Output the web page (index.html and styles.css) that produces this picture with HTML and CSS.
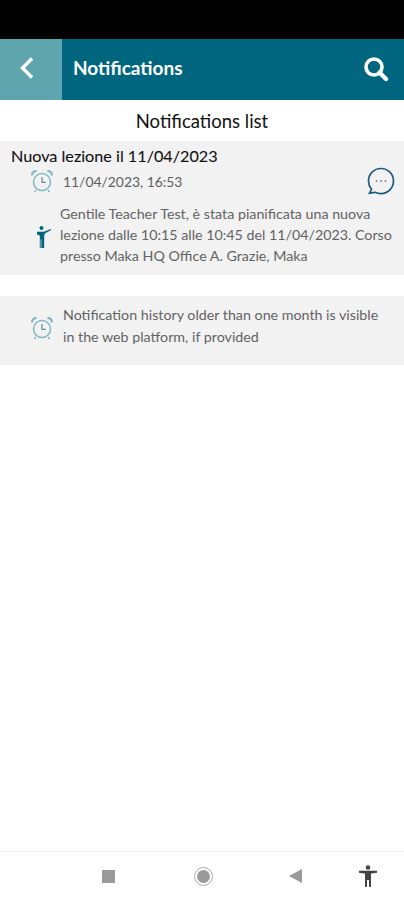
FILE: index.html
```html
<!DOCTYPE html>
<html lang="en">
<head>
<meta charset="utf-8">
<title>Notifications</title>
<link rel="stylesheet" href="styles.css">
</head>
<body>
<div class="app">
  <div class="statusbar"></div>
  <header class="topbar">
    <div class="back">
      <svg width="16" height="24" viewBox="0 0 16 24"><path d="M13 2.500 3.500 12 13 21.500" fill="none" stroke="#fff" stroke-width="3.400"/></svg>
    </div>
    <div class="title">Notifications</div>
    <svg class="search" width="26" height="26" viewBox="0 0 26 26"><circle cx="11" cy="11" r="8" fill="none" stroke="#fff" stroke-width="3.600"/><path d="M16.500 16.500 23 23" stroke="#fff" stroke-width="4.400" stroke-linecap="round"/></svg>
  </header>
  <h1 class="listhead">Notifications list</h1>
  <section class="card">
    <h2 class="cardtitle">Nuova lezione il 11/04/2023</h2>
    <div class="daterow">
      <svg class="clock" width="24" height="24" viewBox="0 0 24 24"><use href="#alarm"/></svg>
      <span class="date">11/04/2023, 16:53</span>
      <svg class="chat" width="30" height="30" viewBox="0 0 30 30"><path d="M15 2.500C8 2.500 2.500 8 2.500 15c0 3.200 1.200 6.100 3 8.300L3.500 27.200 9 26.300c1.800.9 3.900 1.300 6 1.300 7 0 12.500-5.600 12.500-12.600S22 2.500 15 2.500Z" fill="none" stroke="#1f5a84" stroke-width="1.700"/><circle cx="10.500" cy="15" r=".9" fill="#6b7f8c"/><circle cx="15" cy="15" r=".9" fill="#6b7f8c"/><circle cx="19.500" cy="15" r=".9" fill="#6b7f8c"/></svg>
    </div>
    <div class="msgrow">
      <svg class="teacher" width="16" height="24" viewBox="0 0 16 24"><circle cx="5.500" cy="3" r="2" fill="#00667f"/><path d="M1 6.800h6.800L14.800 4l.4.9-6.400 3.600-.6 2.500V23H5.300v-8.500H4.700V23H3.800V10.500L1 9.500Z" fill="#00667f"/></svg>
      <p class="msg">Gentile Teacher Test, è stata pianificata una nuova lezione dalle 10:15 alle 10:45 del 11/04/2023. Corso presso Maka HQ Office A. Grazie, Maka</p>
    </div>
  </section>
  <section class="card note">
    <svg class="clock" width="24" height="24" viewBox="0 0 24 24"><use href="#alarm"/></svg>
    <p class="msg">Notification history older than one month is visible in the web platform, if provided</p>
  </section>
  <div class="spacer"></div>
  <nav class="navbar">
    <span class="navsquare"></span>
    <span class="navhome"><span class="navdot"></span></span>
    <svg class="navback" width="13" height="16" viewBox="0 0 13 16"><path d="M13 1v14L0 8Z" fill="#9a9a9a"/></svg>
    <svg class="a11y" width="20" height="22" viewBox="0 0 20 22"><circle cx="10" cy="2.500" r="2.300" fill="#444"/><path d="M1 5.800h18v1.900l-6 .9V22h-2v-7H9v7H7V8.600l-6-.9Z" fill="#444"/></svg>
  </nav>
</div>
<svg class="defs" width="0" height="0"><defs><g id="alarm" fill="none" stroke="#7fbac1"><circle cx="12" cy="13" r="8.500" stroke-width="1.500"/><path d="M12 8v5.300h3.800" stroke="#5b8f99" stroke-width="1.200"/><path d="M2 6.500C2 3.500 4 1.800 6.500 2.300M22 6.500C22 3.500 20 1.800 17.500 2.300" stroke-width="2.200"/><path d="M6 21 4.500 23M18 21l1.500 2" stroke-width="1.300"/></g></defs></svg>
</body>
</html>
```
FILE: styles.css
```css
* { box-sizing: border-box; }
html, body { margin: 0; padding: 0; }
body { font-family: Lato, "Open Sans", sans-serif; background: #fff; color: #111; }
.app { width: 404px; height: 900px; display: flex; flex-direction: column; overflow: hidden; }
.statusbar { height: 39px; background: #000; flex: none; }
.topbar { height: 61px; flex: none; display: flex; align-items: center; background: #00667f; color: #fff; }
.back { width: 62px; height: 100%; background: #5fa5ae; display: flex; align-items: center; justify-content: center; padding-right: 8px; padding-bottom: 3px; }
.title { margin-left: 11px; margin-bottom: 4px; font-size: 19px; font-weight: 700; flex: 1; }
.search { margin-right: 15px; margin-bottom: 2px; }
.listhead { margin: 0; height: 41px; flex: none; display: flex; align-items: center; justify-content: center; font-size: 18.500px; font-weight: 400; color: #111; }
.card { background: #f2f2f2; flex: none; height: 134px; }
.cardtitle { margin: 0; padding: 5px 0 0 11px; font-size: 16.200px; line-height: 20px; font-weight: 400; color: #111; -webkit-text-stroke: 0.1px #111; }
.daterow { display: flex; align-items: center; padding-left: 30px; height: 32px; margin-top: -1px; }
.date { margin-left: 9px; font-size: 13.900px; color: #5e5e5e; flex: 1; }
.chat { margin-right: 8px; }
.msgrow { display: flex; align-items: center; padding: 0 8px 8px 36px; margin-top: 6px; }
.teacher { flex: none; margin-right: 8px; margin-top: 4px; }
.msg { margin: 0; font-size: 14.250px; line-height: 21px; color: #636363; }
.note { height: 69px; margin-top: 21px; display: flex; align-items: center; padding: 0 22px 10px 30px; }
.note .clock { flex: none; margin: 4px 9px 0 0; }
.note .msg { line-height: 22px; }
.spacer { flex: 1; }
.navbar { height: 49px; flex: none; border-top: 1px solid #f2f2f2; display: flex; align-items: center; padding-left: 102px; }
.navsquare { width: 13px; height: 13px; background: #9a9a9a; }
.navhome { width: 19px; height: 19px; margin-left: 79px; border: 1px solid #aaa; border-radius: 50%; display: flex; align-items: center; justify-content: center; }
.navdot { width: 13px; height: 13px; border-radius: 50%; background: #9a9a9a; }
.navback { margin-left: 76px; }
.a11y { margin-left: 56px; }
.defs { position: absolute; }
```
